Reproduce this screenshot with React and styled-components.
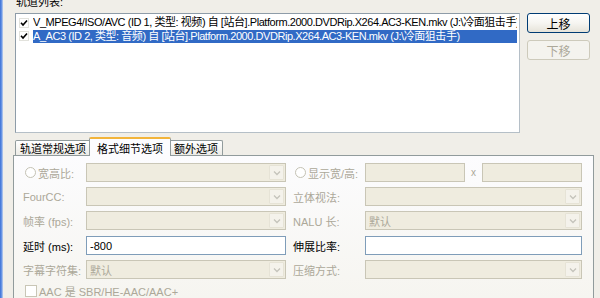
import React from "react";
import styled, { createGlobalStyle } from "styled-components";

const Global = createGlobalStyle`
  html, body { margin: 0; padding: 0; background: #f0eee8; }
  * { box-sizing: border-box; }
`;

const FONT = `"Liberation Sans", "Noto Sans CJK SC", sans-serif`;

const Window = styled.div`
  width: 600px;
  height: 298px;
  overflow: hidden;
  display: flex;
  background: #f0eee8;
  font-family: ${FONT};
  font-size: 11px;
  color: #000;
`;

const FrameEdge = styled.div`
  width: 3px;
  flex: none;
  background: linear-gradient(90deg, #3a6fd6, #6f9ae6 60%, #c9d6ee);
`;

const Main = styled.div`
  flex: 1;
  min-width: 0;
  display: flex;
  flex-direction: column;
  padding-left: 10px;
  & > * { flex-shrink: 0; }
`;

const SectionLabel = styled.div`
  margin-top: -5px;
  padding-left: 3px;
  height: 18px;
  line-height: 14px;
  font-size: 11px;
`;

const TopRow = styled.div`
  display: flex;
  gap: 7px;
  padding-left: 2px;
`;

const ListBox = styled.div`
  width: 505px;
  height: 120px;
  background: #fff;
  border: 1px solid #8e9ca8;
  border-right-color: #b5bfc7;
  border-bottom-color: #b5bfc7;
  padding: 2px 2px 0 2px;
  overflow: hidden;
`;

const ListRow = styled.div`
  display: flex;
  align-items: center;
  height: 13.5px;
  white-space: nowrap;
  overflow: hidden;
`;

const ListCheck = styled.span`
  width: 10px;
  height: 10px;
  flex: none;
  margin: 0 4px 0 1px;
  display: flex;
  align-items: center;
  justify-content: center;
  border: 1px solid #e2e2dc;
  background: #fff;
`;

const ListText = styled.span`
  flex: 1;
  height: 13.5px;
  line-height: 13.5px;
  letter-spacing: -0.45px;
  background: ${(p) => (p.$selected ? "#316ac5" : "transparent")};
  color: ${(p) => (p.$selected ? "#fff" : "#000")};
  overflow: hidden;
`;

const ButtonCol = styled.div`
  display: flex;
  flex-direction: column;
  gap: 7px;
`;

const Button = styled.div`
  width: 63px;
  height: 20px;
  border-radius: 3px;
  display: flex;
  align-items: center;
  justify-content: center;
  font-size: 12px;
  border: 1px solid ${(p) => (p.$disabled ? "#cdcabb" : "#003c74")};
  color: ${(p) => (p.$disabled ? "#aca899" : "#000")};
  background: ${(p) =>
    p.$disabled
      ? "#f4f3ee"
      : "linear-gradient(180deg, #ffffff 0%, #f6f5f1 50%, #e6e3d9 100%)"};
`;

const TabStrip = styled.div`
  display: flex;
  align-items: flex-start;
  height: 18px;
  margin-top: 4px;
  padding-left: 2px;
  position: relative;
  z-index: 2;
`;

const Tab = styled.div`
  height: ${(p) => (p.$active ? "19px" : "15px")};
  margin-top: ${(p) => (p.$active ? "0" : "3px")};
  padding: 0 ${(p) => (p.$active ? "7px" : "4px")};
  margin-left: ${(p) => (p.$active ? "-2px" : "0")};
  margin-right: ${(p) => (p.$active ? "-2px" : "0")};
  position: relative;
  z-index: ${(p) => (p.$active ? 2 : 1)};
  display: flex;
  align-items: center;
  font-size: 11px;
  border: 1px solid #919b9c;
  border-bottom: none;
  border-top: ${(p) => (p.$active ? "2px solid #f2b43a" : "1px solid #919b9c")};
  border-radius: 2px 2px 0 0;
  background: ${(p) =>
    p.$active ? "#fcfcfe" : "linear-gradient(180deg, #ffffff, #ecebe6)"};
`;

const Panel = styled.div`
  width: 581px;
  flex: 1 1 auto !important;
  min-height: 0;
  overflow: hidden;
  border: 1px solid #919b9c;
  border-bottom: none;
  background: linear-gradient(180deg, #fcfcfe, #f6f5f0);
  padding: 7px 0 0 9px;
`;

const Form = styled.div`
  display: grid;
  grid-template-columns: 63px 200px 7px 72px 217px;
  grid-template-rows: 19px 19px 20px 19px 19px 14px;
  row-gap: 5px;
  align-items: start;
`;

const Label = styled.div`
  grid-column: ${(p) => (p.$right ? 4 : 1)};
  height: 19px;
  display: flex;
  align-items: center;
  gap: 2px;
  white-space: nowrap;
  font-size: 11px;
  color: ${(p) => (p.$enabled ? "#000" : "#aca899")};
`;

const Radio = styled.span`
  width: 11px;
  height: 11px;
  border-radius: 50%;
  border: 1px solid #c4c2b4;
  background: #fff;
  margin-left: 2px;
  flex: none;
`;

const Field = styled.div`
  grid-column: ${(p) => (p.$right ? 5 : 2)};
  height: 19px;
  display: flex;
  align-items: center;
  border: 1px solid ${(p) => (p.$white ? "#7f9db9" : "#c9c6b6")};
  background: ${(p) => (p.$white ? "#fff" : "#efecdf")};
  padding: 1px 1px 1px 3px;
  color: ${(p) => (p.$white ? "#000" : "#aca899")};
  font-size: 11px;
`;

const FieldText = styled.span`
  flex: 1;
`;

const DropButton = styled.span`
  width: 15px;
  height: 15px;
  display: flex;
  align-items: center;
  justify-content: center;
  background: #f4f2eb;
  border: 1px solid #e6e3d6;
  border-radius: 1px;
`;

const PairField = styled.div`
  grid-column: 5;
  display: flex;
  align-items: center;
`;

const SmallBox = styled.div`
  width: 100px;
  height: 19px;
  border: 1px solid #c9c6b6;
  background: #efecdf;
`;

const Times = styled.span`
  width: 17px;
  text-align: center;
  color: #aca899;
  font-size: 10px;
`;

const CheckRow = styled.div`
  grid-column: 1 / span 3;
  display: flex;
  align-items: center;
  gap: 2px;
  color: #aca899;
  font-size: 11px;
  padding-left: 2px;
  height: 14px;
`;

const CheckBox = styled.span`
  width: 12px;
  height: 12px;
  border: 1px solid #c9c6b6;
  background: #fff;
  flex: none;
`;

const Chevron = () => (
  <svg width="8" height="6" viewBox="0 0 8 6">
    <path d="M1 1.5 L4 4.5 L7 1.5" fill="none" stroke="#c4c3bb" strokeWidth="1.3" />
  </svg>
);

const Tick = () => (
  <svg width="8" height="8" viewBox="0 0 8 8">
    <path d="M1 3.8 L3 6 L7 1.5" fill="none" stroke="#000" strokeWidth="1.6" />
  </svg>
);

const Combo = ({ right, text }) => (
  <Field $right={right}>
    <FieldText>{text}</FieldText>
    <DropButton>
      <Chevron />
    </DropButton>
  </Field>
);

export default function App() {
  return (
    <>
      <Global />
      <Window>
        <FrameEdge />
        <Main>
          <SectionLabel>轨道列表:</SectionLabel>
          <TopRow>
            <ListBox>
              <ListRow>
                <ListCheck>
                  <Tick />
                </ListCheck>
                <ListText>
                  V_MPEG4/ISO/AVC (ID 1, 类型: 视频) 自 [站台].Platform.2000.DVDRip.X264.AC3-KEN.mkv (J:\冷面狙击手)
                </ListText>
              </ListRow>
              <ListRow>
                <ListCheck>
                  <Tick />
                </ListCheck>
                <ListText $selected>
                  A_AC3 (ID 2, 类型: 音频) 自 [站台].Platform.2000.DVDRip.X264.AC3-KEN.mkv (J:\冷面狙击手)
                </ListText>
              </ListRow>
            </ListBox>
            <ButtonCol>
              <Button>上移</Button>
              <Button $disabled>下移</Button>
            </ButtonCol>
          </TopRow>
          <TabStrip>
            <Tab>轨道常规选项</Tab>
            <Tab $active>格式细节选项</Tab>
            <Tab>额外选项</Tab>
          </TabStrip>
          <Panel>
            <Form>
              <Label>
                <Radio />
                宽高比:
              </Label>
              <Combo />
              <Label $right>
                <Radio />
                显示宽/高:
              </Label>
              <PairField>
                <SmallBox />
                <Times>x</Times>
                <SmallBox />
              </PairField>

              <Label>FourCC:</Label>
              <Combo />
              <Label $right>立体视法:</Label>
              <Combo right />

              <Label>帧率 (fps):</Label>
              <Combo />
              <Label $right>NALU 长:</Label>
              <Combo right text="默认" />

              <Label $enabled>延时 (ms):</Label>
              <Field $white>-800</Field>
              <Label $right $enabled>伸展比率:</Label>
              <Field $right $white />

              <Label>字幕字符集:</Label>
              <Combo text="默认" />
              <Label $right>压缩方式:</Label>
              <Combo right />

              <CheckRow>
                <CheckBox />
                AAC 是 SBR/HE-AAC/AAC+
              </CheckRow>
            </Form>
          </Panel>
        </Main>
      </Window>
    </>
  );
}
